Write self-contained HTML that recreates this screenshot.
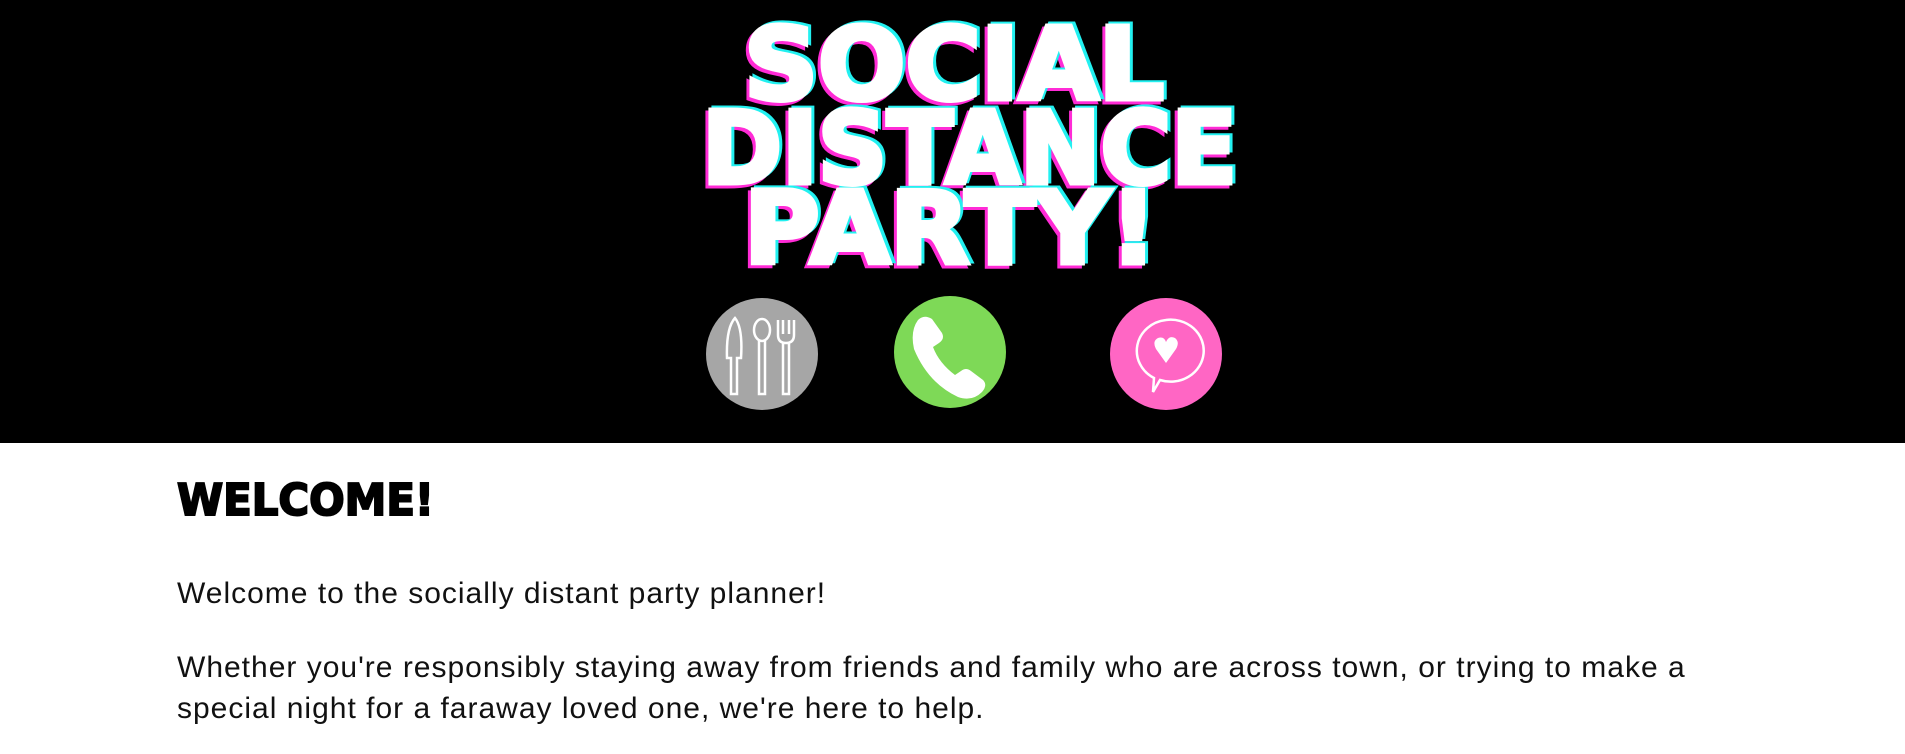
<!DOCTYPE html>
<html><head><meta charset="utf-8"><style>
html,body{margin:0;padding:0;width:1905px;height:754px;overflow:hidden;background:#fff;font-family:"Liberation Sans",sans-serif;}
.hdr{position:absolute;left:0;top:0;width:1905px;height:443px;background:#000;}
p{position:absolute;left:177px;margin:0;font-size:30px;letter-spacing:1px;color:#111;line-height:41px;white-space:nowrap;}
</style></head><body>
<div class="hdr">
<svg width="1905" height="443" style="position:absolute;left:0;top:0">
<g font-family="DejaVu Sans, Liberation Sans, sans-serif" font-weight="bold" font-size="100">
 <g fill="#ff2bd6" stroke="#ff2bd6" stroke-width="5" transform="translate(-3,3)">
  <text x="744" y="99" textLength="420" lengthAdjust="spacingAndGlyphs">SOCIAL</text>
  <text x="702" y="183" textLength="535" lengthAdjust="spacingAndGlyphs">DISTANCE</text>
  <text x="744" y="263" textLength="413" lengthAdjust="spacingAndGlyphs">PARTY!</text>
 </g>
 <g fill="#22f0f0" stroke="#22f0f0" stroke-width="5" transform="translate(3,-2)">
  <text x="744" y="99" textLength="420" lengthAdjust="spacingAndGlyphs">SOCIAL</text>
  <text x="702" y="183" textLength="535" lengthAdjust="spacingAndGlyphs">DISTANCE</text>
  <text x="744" y="263" textLength="413" lengthAdjust="spacingAndGlyphs">PARTY!</text>
 </g>
 <g fill="#fff" stroke="#fff" stroke-width="5">
  <text x="744" y="99" textLength="420" lengthAdjust="spacingAndGlyphs">SOCIAL</text>
  <text x="702" y="183" textLength="535" lengthAdjust="spacingAndGlyphs">DISTANCE</text>
  <text x="744" y="263" textLength="413" lengthAdjust="spacingAndGlyphs">PARTY!</text>
 </g>
</g>
<circle cx="762" cy="354" r="56" fill="#a6a6a6"/>
<g fill="none" stroke="#fff" stroke-width="2.5">
 <path d="M735 318 q8 10 6 40 h-4 v36 h-6 v-36 h-4 q-1 -30 8 -40z"/>
 <ellipse cx="762" cy="330" rx="8" ry="11"/>
 <path d="M759 341 v53 h6 v-53"/>
 <path d="M778 320 v15 q0 8 8 8 q8 0 8 -8 v-15 M783 320 v14 M789 320 v14 M783 343 v51 h6 v-51"/>
</g>
<circle cx="950" cy="352" r="56" fill="#7ed957"/>
<path d="M918 320 q6 -6 14 -1 l10 14 q3 6 -3 10 l-6 4 q6 16 22 28 l6 -4 q5 -4 10 0 l12 9 q5 5 -1 12 q-10 10 -24 5 q-30 -14 -44 -48 q-4 -18 4 -29z" fill="#fff"/>
<circle cx="1166" cy="354" r="56" fill="#ff66c4"/>
<path d="M1166 320 a33 31 0 1 1 -6 60 l-7 12 l1 -14 a33 31 0 0 1 12 -58z" fill="none" stroke="#fff" stroke-width="2.5"/>
<path d="M1166 363 l-10 -14 q-4 -8 2 -11 q6 -2 8 4 q3 -7 9 -4 q5 4 1 11z" fill="#fff"/>
</svg>
</div>
<svg width="300" height="60" style="position:absolute;left:177px;top:470px">
<text x="0" y="45" font-family="DejaVu Sans, Liberation Sans, sans-serif" font-weight="bold" font-size="44" textLength="257" lengthAdjust="spacingAndGlyphs" fill="#000" stroke="#000" stroke-width="2">WELCOME!</text>
</svg>
<p style="top:573px">Welcome to the socially distant party planner!</p>
<p style="top:647px">Whether you're responsibly staying away from friends and family who are across town, or trying to make a<br>special night for a faraway loved one, we're here to help.</p>
</body></html>
